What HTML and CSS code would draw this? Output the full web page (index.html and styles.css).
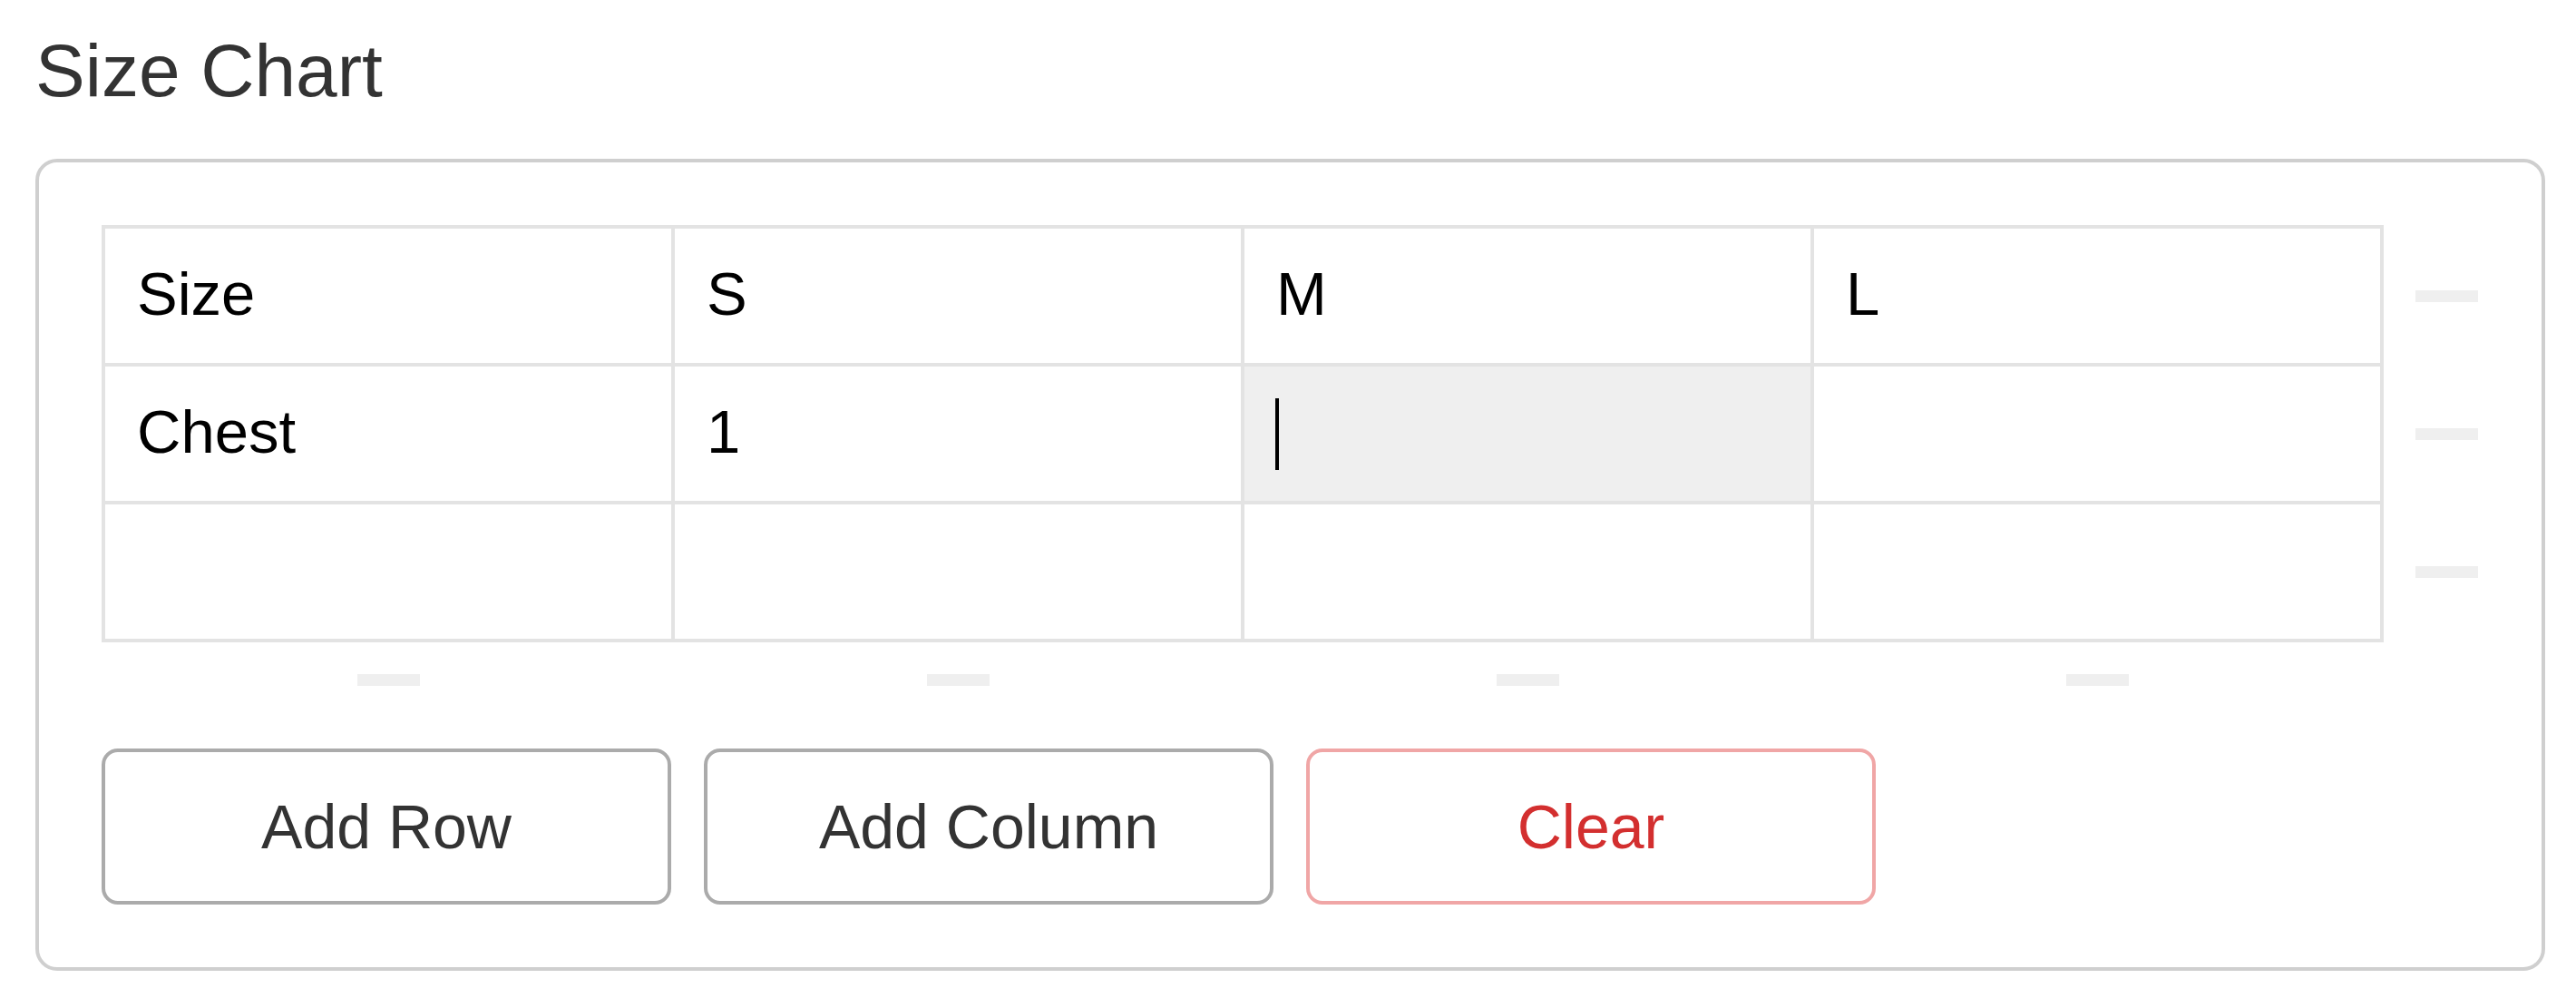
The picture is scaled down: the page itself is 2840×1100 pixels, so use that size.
FILE: index.html
```html
<!DOCTYPE html>
<html lang="en">
<head>
<meta charset="utf-8">
<title>Size Chart</title>
<link rel="stylesheet" href="styles.css">
</head>
<body>
<div class="page">
  <h2 class="title">Size Chart</h2>
  <div class="card">
    <div class="editor">
      <div class="grid">
        <div class="cell">Size</div>
        <div class="cell">S</div>
        <div class="cell">M</div>
        <div class="cell">L</div>
        <div class="cell">Chest</div>
        <div class="cell">1</div>
        <div class="cell focused"><span class="caret"></span></div>
        <div class="cell"></div>
        <div class="cell"></div>
        <div class="cell"></div>
        <div class="cell"></div>
        <div class="cell"></div>
      </div>
      <div class="row-handles">
        <div class="slot"><span class="handle"></span></div>
        <div class="slot"><span class="handle"></span></div>
        <div class="slot"><span class="handle"></span></div>
      </div>
      <div class="col-handles">
        <div class="slot"><span class="handle"></span></div>
        <div class="slot"><span class="handle"></span></div>
        <div class="slot"><span class="handle"></span></div>
        <div class="slot"><span class="handle"></span></div>
      </div>
    </div>
    <div class="actions">
      <button class="btn">Add Row</button>
      <button class="btn">Add Column</button>
      <button class="btn danger">Clear</button>
    </div>
  </div>
</div>
</body>
</html>
```

FILE: styles.css
```css
html, body {
  margin: 0;
  padding: 0;
  background: #ffffff;
}

body {
  font-family: "Liberation Sans", Arial, Helvetica, sans-serif;
}

.page {
  padding-left: 39px;
}

.title {
  margin: 37px 0 56px 0;
  font-size: 82px;
  line-height: 82px;
  font-weight: normal;
  color: #333333;
}

.card {
  display: inline-block;
  box-sizing: border-box;
  border: 4px solid #cfcfcf;
  border-radius: 24px;
  padding: 69px 70px 69px 69px;
}

.editor {
  display: grid;
  grid-template-columns: 2516px 69px;
  grid-template-rows: auto auto;
  column-gap: 35px;
  row-gap: 35px;
}

.grid {
  display: grid;
  grid-template-columns: repeat(4, 628px);
  grid-auto-rows: 152px;
  border-top: 4px solid #e3e3e3;
  border-left: 4px solid #e3e3e3;
}

.cell {
  box-sizing: border-box;
  border-right: 4px solid #e3e3e3;
  border-bottom: 4px solid #e3e3e3;
  display: flex;
  align-items: center;
  padding-left: 35px;
  padding-bottom: 6px;
  font-size: 67px;
  color: #000000;
}

.cell.focused {
  background: #efefef;
  padding-left: 34px;
  padding-bottom: 0;
}

.caret {
  display: block;
  width: 4px;
  height: 79px;
  background: #000000;
}

.row-handles {
  display: grid;
  grid-auto-rows: 152px;
  padding-top: 2px;
}

.col-handles {
  display: grid;
  grid-template-columns: repeat(4, 628px);
  padding-left: 2px;
}

.slot {
  display: flex;
  align-items: center;
  justify-content: center;
}

.handle {
  display: block;
  width: 69px;
  height: 13px;
  background: #efefef;
}

.actions {
  display: flex;
  gap: 36px;
  margin-top: 69px;
}

.btn {
  box-sizing: border-box;
  width: 628px;
  height: 172px;
  border: 4px solid #ababab;
  border-radius: 18px;
  background: #ffffff;
  font-family: "Liberation Sans", Arial, Helvetica, sans-serif;
  font-size: 68px;
  color: #333333;
  padding: 0;
}

.btn.danger {
  border-color: #f0a6a6;
  color: #d32f2f;
}
```
